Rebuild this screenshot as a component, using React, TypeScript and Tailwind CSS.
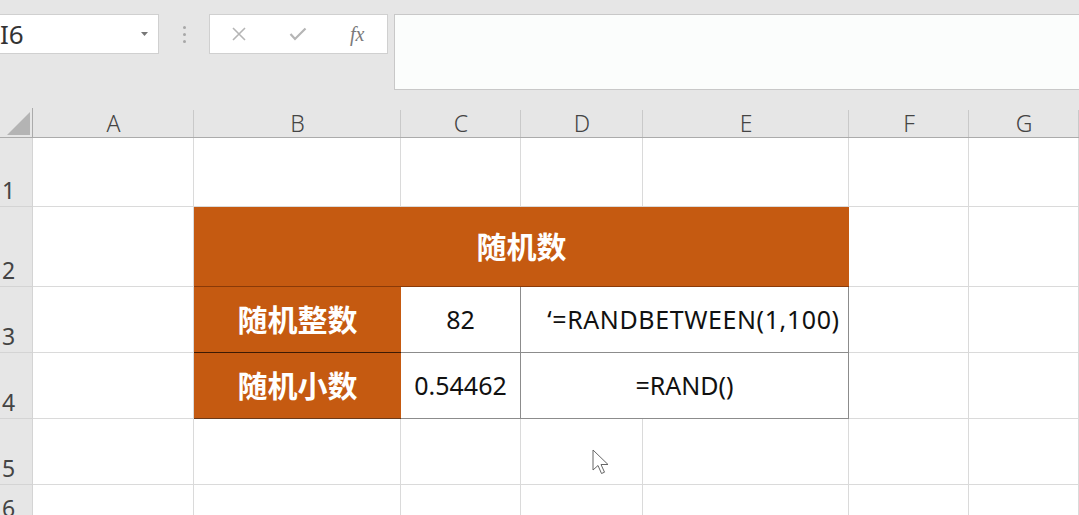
import React from "react";

const cols = ["A", "B", "C", "D", "E", "F", "G"];
const rowHeights = [69, 80, 66, 66, 66, 40];

const font = { fontFamily: '"Noto Sans", "Noto Sans CJK SC", sans-serif' };

const Toolbar = () => (
    <div className="h-[108px] bg-[#e6e6e6] flex items-start pt-[14px]">
        <div className="w-[159px] h-[40px] bg-white border border-[#d0d0d0] border-l-0 flex items-center justify-between pr-[10px]">
            <span className="text-[26px] text-[#333] leading-none">I6</span>
            <svg width="7" height="4" viewBox="0 0 7 4"><path d="M0 0h7L3.5 4z" fill="#777" /></svg>
        </div>
        <div className="w-[50px] h-[40px] flex flex-col items-center justify-center gap-[4px]">
            <span className="w-[3px] h-[3px] rounded-full bg-[#a8a8a8]" />
            <span className="w-[3px] h-[3px] rounded-full bg-[#a8a8a8]" />
            <span className="w-[3px] h-[3px] rounded-full bg-[#a8a8a8]" />
        </div>
        <div className="w-[179px] h-[40px] bg-white border border-[#d0d0d0] flex items-center">
            <svg className="ml-[21px]" width="16" height="16" viewBox="0 0 16 16">
                <path d="M2 2l12 12M14 2L2 14" stroke="#b5b5b5" strokeWidth="1.6" />
            </svg>
            <svg className="ml-[42px]" width="18" height="14" viewBox="0 0 18 14">
                <path d="M1.5 7l4.5 5L16.5 1.5" stroke="#b5b5b5" strokeWidth="2.2" fill="none" />
            </svg>
            <span className="ml-[43px] text-[20px] italic text-[#7a7a7a] leading-none" style={{ fontFamily: '"Liberation Serif", serif' }}>fx</span>
        </div>
        <div className="ml-[6px] flex-1 h-[76px] bg-[#fbfdfc] border border-[#c8c8c8] border-r-0" />
    </div>
);

const RowHeader = ({ n, h }: { n: number; h: number }) => (
    <div className="bg-[#e6e6e6] border-r border-[#ababab] border-b border-[#d4d4d4] flex items-end pl-[2px] pb-[4px] text-[23px] leading-none text-[#444]" style={{ height: h }}>
        {n}
    </div>
);

const Cell = ({ className = "" }: { className?: string }) => (
    <div className={`border-r border-b border-[#dadada] bg-white ${className}`} />
);

export default function App() {
    return (
        <div className="w-[1079px] h-[515px] overflow-hidden bg-white relative" style={font}>
            <Toolbar />
            <div className="grid grid-cols-[33px_161px_207px_120px_122px_206px_120px_1fr]">
                <div className="h-[30px] bg-[#e6e6e6] border-r border-b border-[#ababab] relative">
                    <svg className="absolute left-0 top-0" width="33" height="30" viewBox="0 0 33 30">
                        <path d="M30 4v23H7z" fill="#b4b4b4" />
                    </svg>
                </div>
                {cols.map((c) => (
                    <div key={c} className="h-[30px] bg-[#e6e6e6] border-b border-[#ababab] flex items-center justify-center pt-[2px] text-[23px] text-[#444] font-light relative">
                        <span className="absolute right-0 top-[2px] bottom-0 w-px bg-[#c9c9c9]" />
                        {c}
                    </div>
                ))}

                {/* row 1 */}
                <RowHeader n={1} h={rowHeights[0]} />
                {cols.map((c) => <Cell key={c} />)}

                {/* row 2 */}
                <RowHeader n={2} h={rowHeights[1]} />
                <Cell />
                <div className="col-span-4 bg-[#c55a11] border-b border-[#8a3a08] flex items-center justify-center text-white text-[30px] font-bold">
                    随机数
                </div>
                <Cell />
                <Cell />

                {/* row 3 */}
                <RowHeader n={3} h={rowHeights[2]} />
                <Cell />
                <div className="bg-[#c55a11] border-b border-[#3d1a03] flex items-center justify-center text-white text-[30px] font-bold">随机整数</div>
                <div className="bg-white border-r border-b border-[#8c8c8c] flex items-center justify-center text-[25px] text-[#111]">82</div>
                <div className="col-span-2 bg-white border-r border-b border-[#8c8c8c] flex items-center justify-center pl-[18px] text-[25px] tracking-[0.6px] text-[#111]">‘=RANDBETWEEN(1,100)</div>
                <Cell />
                <Cell />

                {/* row 4 */}
                <RowHeader n={4} h={rowHeights[3]} />
                <Cell />
                <div className="bg-[#c55a11] border-b border-[#6b3a1a] flex items-center justify-center text-white text-[30px] font-bold">随机小数</div>
                <div className="bg-white border-r border-b border-[#8c8c8c] flex items-center justify-center text-[25px] text-[#111]">0.54462</div>
                <div className="col-span-2 bg-white border-r border-b border-[#8c8c8c] flex items-center justify-center text-[25px] text-[#111]">=RAND()</div>
                <Cell />
                <Cell />

                {/* row 5 */}
                <RowHeader n={5} h={rowHeights[4]} />
                {cols.map((c) => <Cell key={c} />)}

                {/* row 6 */}
                <RowHeader n={6} h={rowHeights[5]} />
                {cols.map((c) => <Cell key={c} />)}
            </div>

            {/* mouse pointer */}
            <svg className="absolute left-[592px] top-[449px]" width="18" height="28" viewBox="0 0 18 28">
                <path d="M1 1v20l5-4.5 3.5 8 3-1.3-3.5-7.7h7z" fill="#fff" stroke="#666" strokeWidth="1" strokeLinejoin="round" />
            </svg>
        </div>
    );
}
